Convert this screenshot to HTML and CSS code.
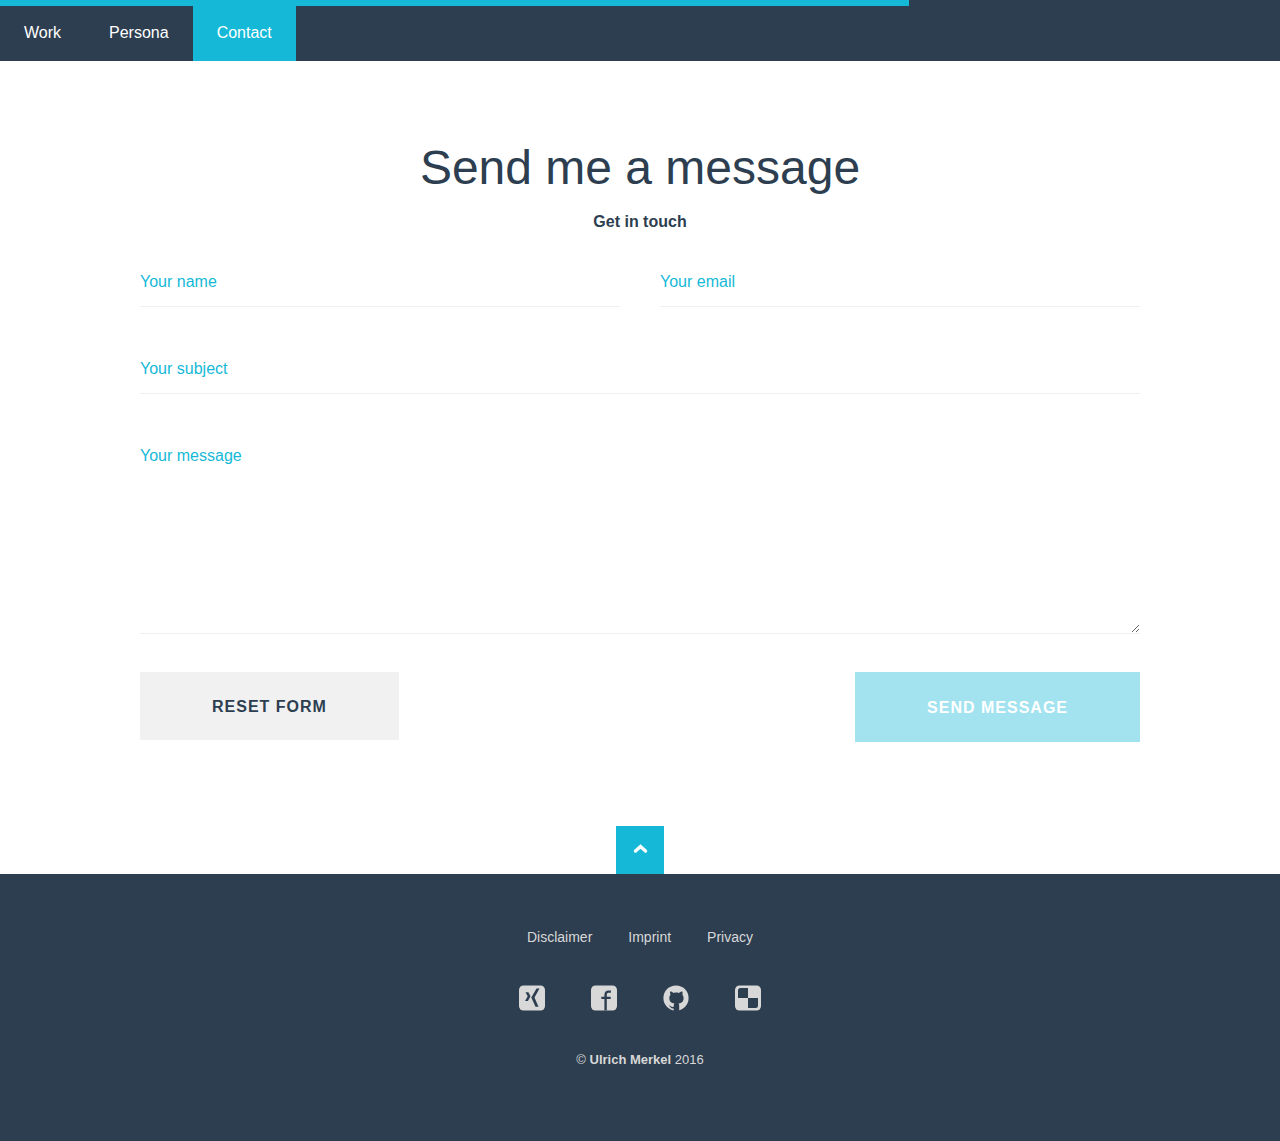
FILE: index.html
```html
<!DOCTYPE html>
<html lang="en">
<head>
  <meta charset="utf-8">
  <meta name="viewport" content="width=device-width, initial-scale=1">
  <title>Contact – Ulrich Merkel</title>
  <link rel="stylesheet" href="styles.css">
</head>
<body>
  <header class="header">
    <div class="progress"><div class="progress-bar" style="width: 71%"></div></div>
    <nav class="nav" aria-label="Main">
      <a class="nav-link" href="#work">Work</a>
      <a class="nav-link" href="#persona">Persona</a>
      <a class="nav-link nav-link-active" href="#contact" aria-current="page">Contact</a>
    </nav>
  </header>

  <main class="main">
    <h1 class="title">Send me a message</h1>
    <p class="subtitle">Get in touch</p>
    <form class="form">
      <div class="row">
        <input class="field" type="text" name="name" placeholder="Your name" aria-label="Your name">
        <input class="field" type="email" name="email" placeholder="Your email" aria-label="Your email">
      </div>
      <input class="field" type="text" name="subject" placeholder="Your subject" aria-label="Your subject">
      <textarea class="field field-message" name="message" placeholder="Your message" aria-label="Your message"></textarea>
      <div class="actions">
        <button class="button button-reset" type="reset">Reset form</button>
        <button class="button button-send" type="submit" disabled>Send message</button>
      </div>
    </form>
  </main>

  <a class="to-top" href="#top" aria-label="Back to top">
    <svg width="16" height="12" viewBox="0 0 16 12" aria-hidden="true"><path d="M3.500 7 8.500 2.500l5 4.500" fill="none" stroke="currentColor" stroke-width="3.400" stroke-linecap="round"/></svg>
  </a>

  <footer class="footer">
    <nav class="footer-links" aria-label="Legal">
      <a href="#disclaimer">Disclaimer</a>
      <a href="#imprint">Imprint</a>
      <a href="#privacy">Privacy</a>
    </nav>
    <div class="social">
      <a href="#xing" aria-label="Xing">
        <svg class="icon" viewBox="0 0 26 26" aria-hidden="true"><rect width="26" height="25" y=".5" rx="4.5" fill="currentColor"/><path class="cut" d="M6.500 7.300h2.900l2.100 3.900L8.900 16H6l2.700-4.800zM17.500 3.500h3l-5 9 4 9.200h-3l-4.200-9.200z"/></svg>
      </a>
      <a href="#facebook" aria-label="Facebook">
        <svg class="icon" viewBox="0 0 26 26" aria-hidden="true"><rect width="26" height="25" y=".5" rx="4.500" fill="currentColor"/><path class="cut" d="M13.400 25.500V14H10.300v-2.300h3.100V10c0-3.200 1.600-4.600 4.300-4.600h2.200v2.300h-1.700c-1.700 0-2.400.5-2.400 2v2h3.900V14h-3.900v11.500z"/></svg>
      </a>
      <a href="#github" aria-label="GitHub">
        <svg class="icon" viewBox="0 0 26 26" aria-hidden="true"><circle cx="13" cy="13" r="12.600" fill="currentColor"/><path class="cut" d="M7.200 6.500c1.300 0 2.600.7 3.400 1.400 1.600-.4 3.700-.4 5.300 0 .8-.7 2.100-1.400 3.400-1.400.4 1 .4 2.300.1 3.200.8 1 1.200 2 1.200 3.400 0 3.500-1.900 5-5 5.500.4.600.6 1.300.6 2.200V26h-5.500v-2.500c-3 .3-3.600-2.200-5-3 1.900-.1 2.300 1.400 3.700 1.500.6 0 .9-.1 1.300-.2 0-1.300.2-2.500.8-3.200-3.300-.5-5.200-2-5.200-5.500 0-1.400.4-2.400 1.200-3.400-.4-.9-.6-2.100-.3-3.200z"/></svg>
      </a>
      <a href="#delicious" aria-label="Delicious">
        <svg class="icon" viewBox="0 0 26 26" aria-hidden="true"><rect width="26" height="25" y=".5" rx="4.500" fill="currentColor"/><path class="cut" d="M5.500 3H13v10H3V5.500Q3 3 5.500 3zM13 13h10v7.500q0 2.500-2.500 2.500H13z"/></svg>
      </a>
    </div>
    <p class="copyright">© <strong>Ulrich Merkel</strong> 2016</p>
  </footer>
</body>
</html>
```
FILE: styles.css
```css
* {
  box-sizing: border-box;
}

body {
  display: flex;
  flex-direction: column;
  min-height: 100vh;
  margin: 0;
  color: #2d3e50;
  background: #fff;
  font-family: "Liberation Sans", Arial, sans-serif;
  font-size: 16px;
  line-height: 24px;
}

a {
  color: inherit;
  text-decoration: none;
}

.header {
  background: #2d3e50;
}

.progress {
  height: 6px;
}

.progress-bar {
  height: 100%;
  background: #15b9d7;
}

.nav {
  display: flex;
}

.nav-link {
  padding: 15px 24px 16px;
  color: #fff;
}

.nav-link-active {
  background: #15b9d7;
}

.main {
  width: 100%;
  max-width: 1040px;
  margin: 0 auto;
  padding: 79px 20px 84px;
}

.title {
  margin: 0;
  font-size: 48px;
  font-weight: 400;
  line-height: 56px;
  text-align: center;
}

.subtitle {
  margin: 14px 0 23px;
  font-weight: 700;
  text-align: center;
}

.form {
  display: flex;
  flex-direction: column;
  gap: 37px;
}

.row {
  display: grid;
  grid-template-columns: 1fr 1fr;
  gap: 40px;
}

.field {
  display: block;
  width: 100%;
  height: 50px;
  padding: 0;
  border: 0;
  border-bottom: 1px solid #f0f0f0;
  border-radius: 0;
  outline: 0;
  background: transparent;
  color: #2d3e50;
  font: inherit;
}

.field::placeholder {
  color: #15b9d7;
  opacity: 1;
}

.field-message {
  height: 203px;
  padding: 13px 0;
  resize: vertical;
}

.actions {
  display: flex;
  align-items: flex-start;
  justify-content: space-between;
  margin-top: 1px;
}

.button {
  padding: 23px 72px 21px;
  border: 0;
  font: inherit;
  font-weight: 700;
  letter-spacing: 1px;
  text-transform: uppercase;
}

.button-reset {
  color: #2d3e50;
  background: #f1f1f1;
}

.button-send {
  padding: 24px 72px 22px;
  color: #fff;
  background: #a2e3ef;
}

.to-top {
  display: flex;
  align-items: center;
  justify-content: center;
  align-self: center;
  width: 48px;
  height: 48px;
  color: #fff;
  background: #15b9d7;
}

.footer {
  display: flex;
  flex: 1;
  flex-direction: column;
  align-items: center;
  padding: 51px 20px 70px;
  color: #d8d8d8;
  background: #2d3e50;
}

.footer-links {
  display: flex;
  gap: 36px;
  font-size: 14px;
}

.social {
  display: flex;
  gap: 46px;
  margin: 36px 0 37px;
}

.icon {
  display: block;
  width: 26px;
  height: 26px;
}

.cut {
  fill: #2d3e50;
}

.copyright {
  margin: 0;
  font-size: 13px;
}
```
